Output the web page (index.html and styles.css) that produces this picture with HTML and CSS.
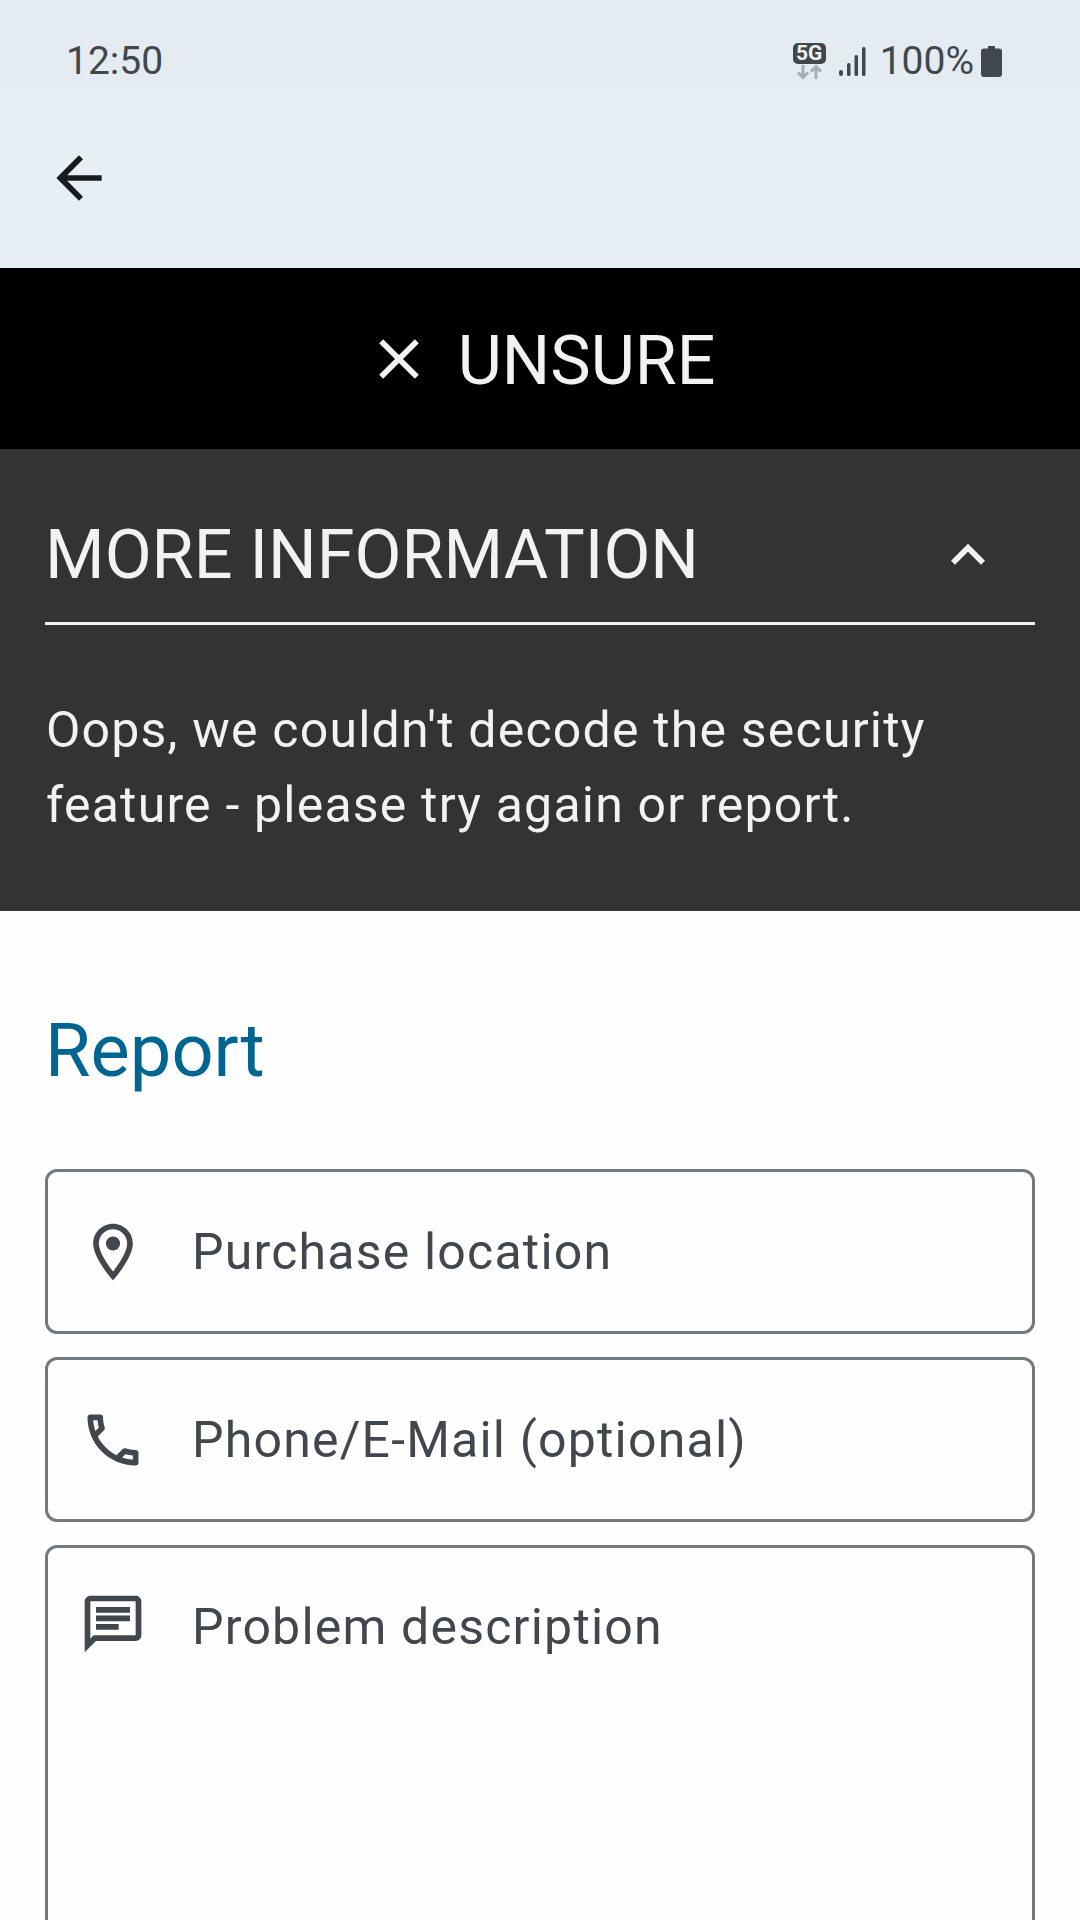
FILE: index.html
```html
<!DOCTYPE html>
<html lang="en">
<head>
    <meta charset="UTF-8">
    <meta name="viewport" content="width=device-width, initial-scale=1.0">
    <title>Report</title>
    <link rel="stylesheet" href="styles.css">
</head>
<body>
    <div class="status-bar">
        <span class="clock">12:50</span>
        <div class="status-icons">
            <div class="net">
                <span class="net-badge">5G</span>
                <svg class="net-arrows" viewBox="0 0 33 16"><path d="M10 1v12M5 8.500l5 5 5-5" /><path d="M23 15V3M18 7.500l5-5 5 5" /></svg>
            </div>
            <svg class="signal" viewBox="0 0 27 29"><rect x="0" y="23" width="4" height="6" rx="2" /><rect x="8" y="16" width="3.500" height="13" rx="1.500" /><rect x="15.500" y="8" width="3.500" height="21" rx="1.500" /><rect x="23" y="0" width="3.500" height="29" rx="1.500" /></svg>
            <span class="battery-text">100%</span>
            <svg class="battery" viewBox="0 0 21 31"><path d="M7 0h7v2.500h4a3 3 0 0 1 3 3V28a3 3 0 0 1-3 3H3a3 3 0 0 1-3-3V5.500a3 3 0 0 1 3-3h4z" /></svg>
        </div>
    </div>

    <div class="app-bar">
        <svg class="icon back" viewBox="0 0 24 24"><path d="M20 11H7.830l5.590-5.590L12 4l-8 8 8 8 1.410-1.410L7.830 13H20v-2z" /></svg>
    </div>

    <div class="verdict">
        <svg class="icon" viewBox="0 0 24 24"><path d="M19 6.410L17.590 5 12 10.590 6.410 5 5 6.410 10.590 12 5 17.590 6.410 19 12 13.410 17.590 19 19 17.590 13.410 12z" /></svg>
        <span class="verdict-text">UNSURE</span>
    </div>

    <div class="info">
        <div class="info-head">
            <span class="info-title">MORE INFORMATION</span>
            <svg class="icon" viewBox="0 0 24 24"><path d="M12 8l-6 6 1.410 1.410L12 10.830l4.590 4.580L18 14z" /></svg>
        </div>
        <p class="info-text">Oops, we couldn't decode the security feature - please try again or report.</p>
    </div>

    <div class="report">
        <h2 class="report-title">Report</h2>
        <div class="field">
            <svg class="icon" viewBox="0 0 24 24"><path d="M12 2C8.130 2 5 5.130 5 9c0 5.250 7 13 7 13s7-7.750 7-13c0-3.870-3.130-7-7-7zM7 9c0-2.760 2.240-5 5-5s5 2.240 5 5c0 2.880-2.880 7.190-5 9.880C9.920 16.210 7 11.850 7 9z" /><circle cx="12" cy="9" r="2.500" /></svg>
            <span>Purchase location</span>
        </div>
        <div class="field">
            <svg class="icon" viewBox="0 0 24 24"><path d="M6.540 5c.060.890.210 1.760.450 2.590l-1.200 1.200c-.410-1.200-.670-2.470-.760-3.790h1.510m9.860 12.020c.850.240 1.720.390 2.600.450v1.490c-1.320-.090-2.590-.350-3.800-.750l1.200-1.190M7.500 3H4c-.550 0-1 .450-1 1 0 9.390 7.610 17 17 17 .550 0 1-.450 1-1v-3.490c0-.550-.450-1-1-1-1.240 0-2.450-.200-3.570-.570-.100-.040-.210-.050-.310-.050-.260 0-.510.100-.710.290l-2.200 2.200c-2.830-1.450-5.150-3.760-6.590-6.590l2.200-2.200c.280-.280.360-.670.250-1.020C8.700 6.450 8.500 5.250 8.500 4c0-.550-.450-1-1-1z" /></svg>
            <span>Phone/E-Mail (optional)</span>
        </div>
        <div class="field field-large">
            <svg class="icon" viewBox="0 0 24 24"><path d="M20 2H4c-1.100 0-2 .900-2 2v18l4-4h14c1.100 0 2-.900 2-2V4c0-1.100-.900-2-2-2zm0 14H5.170L4 17.170V4h16v12z" /><path d="M6 12h8v2H6zm0-3h12v2H6zm0-3h12v2H6z" /></svg>
            <span>Problem description</span>
        </div>
    </div>
</body>
</html>
```

FILE: styles.css
```css
html, body {
    margin: 0;
    height: 1920px;
    overflow: hidden;
}
body {
    font-family: 'Roboto', sans-serif;
    background-color: #fefefe;
    color: #41474d;
}
.icon {
    width: 68px;
    height: 68px;
    flex: none;
    fill: currentColor;
}
.status-bar {
    display: flex;
    align-items: center;
    justify-content: space-between;
    height: 88px;
    padding: 34px 78px 0 66px;
    box-sizing: border-box;
    background-color: #e4ebf1;
    font-size: 39px;
}
.status-icons {
    display: flex;
    align-items: center;
}
.net {
    display: flex;
    flex-direction: column;
    align-items: center;
    width: 33px;
    margin-right: 13px;
}
.net-badge {
    width: 33px;
    height: 21px;
    border-radius: 5px;
    background-color: #41474d;
    color: #f0f3f6;
    font-size: 21px;
    font-weight: 700;
    line-height: 21px;
    text-align: center;
}
.net-arrows {
    width: 33px;
    height: 16px;
    fill: none;
    stroke: #a6acb2;
    stroke-width: 3;
}
.signal {
    width: 27px;
    height: 29px;
    margin-right: 14px;
    fill: #41474d;
}
.battery-text {
    margin-right: 7px;
}
.battery {
    width: 21px;
    height: 31px;
    fill: #41474d;
}
.app-bar {
    display: flex;
    align-items: center;
    height: 180px;
    padding: 0 0 0 45px;
    box-sizing: border-box;
    background-color: #e7eff5;
}
.back {
    color: #191c1f;
}
.verdict {
    display: flex;
    align-items: center;
    justify-content: center;
    height: 181px;
    background-color: #000;
    color: #f2f2f2;
}
.verdict-text {
    margin-left: 25px;
    padding-top: 4px;
    font-size: 68px;
}
.info {
    height: 462px;
    padding: 0 45px;
    box-sizing: border-box;
    background-color: #333333;
    color: #f2f2f2;
}
.info-head {
    display: flex;
    align-items: center;
    justify-content: space-between;
    height: 176px;
    padding: 38px 33px 0 0;
    box-sizing: border-box;
    border-bottom: 3px solid #f2f2f2;
}
.info-title {
    font-size: 68.300px;
}
.info-text {
    margin: 68px 0 0 1px;
    font-size: 50px;
    line-height: 75px;
    letter-spacing: 1.200px;
}
.report {
    padding: 0 45px;
}
.report-title {
    margin: 90px 0 68px 0;
    color: #006591;
    font-size: 74px;
    font-weight: 400;
    line-height: 100px;
}
.field {
    display: flex;
    align-items: center;
    height: 165px;
    margin-bottom: 23px;
    padding-left: 31px;
    box-sizing: border-box;
    border: 3px solid #73797c;
    border-radius: 12px;
    font-size: 50px;
    letter-spacing: 1.200px;
}
.field span {
    margin-left: 45px;
}
.field-large {
    align-items: flex-start;
    height: 500px;
    padding-top: 42px;
}
.field-large span {
    margin-top: 8px;
}
```
